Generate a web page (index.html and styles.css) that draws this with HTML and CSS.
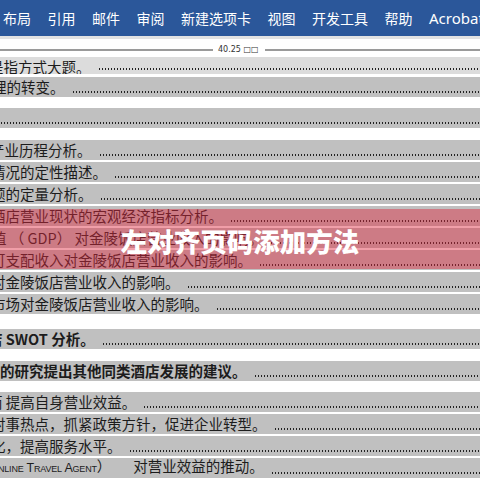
FILE: index.html
```html
<!DOCTYPE html>
<html lang="zh-CN">
<head>
<meta charset="utf-8">
<title>左对齐页码添加方法</title>
<link rel="stylesheet" href="styles.css">
</head>
<body>
<div class="ribbon">
  <span>布局</span><span>引用</span><span>邮件</span><span>审阅</span><span>新建选项卡</span><span>视图</span><span>开发工具</span><span>帮助</span><span class="latin">Acrobat</span>
</div>
<div class="strip"></div>
<div class="ruler">
  <div class="rule-line first"></div>
  <span class="rule-label">40.25 □□</span>
  <div class="rule-line rest"></div>
</div>
<div class="doc">
  <div class="row top"><span class="t cut11">是指方式大题。</span><span class="lead"></span></div>
  <div class="row g3"><span class="t cut8">理的转变。</span><span class="lead"></span></div>
  <div class="row sp11"><span class="lead nolead"></span></div>
  <div class="row sp12"><span class="t cut10">产业历程分析。</span><span class="lead"></span></div>
  <div class="row"><span class="t cut9">情况的定性描述。</span><span class="lead"></span></div>
  <div class="row"><span class="t cut9">题的定量分析。</span><span class="lead"></span></div>
  <div class="row"><span class="t cut9">酒店营业现状的宏观经济指标分析。</span><span class="lead"></span></div>
  <div class="row"><span class="t cut8">值 （ GDP） 对金陵饭店营业收入的影响。</span><span class="lead"></span></div>
  <div class="row"><span class="t cut9">可支配收入对金陵饭店营业收入的影响。</span><span class="lead"></span></div>
  <div class="row"><span class="t cut9">对金陵饭店营业收入的影响。</span><span class="lead"></span></div>
  <div class="row"><span class="t cut9">市场对金陵饭店营业收入的影响。</span><span class="lead"></span></div>
  <div class="row sp15 bold"><span class="t cut12">店 SWOT 分析。</span><span class="lead"></span></div>
  <div class="row sp12 bold"><span class="t">的研究提出其他同类酒店发展的建议。</span><span class="lead"></span></div>
  <div class="row sp11"><span class="t cut12">而 提高自身营业效益。</span><span class="lead"></span></div>
  <div class="row"><span class="t cut9">时事热点，抓紧政策方针，促进企业转型。</span><span class="lead"></span></div>
  <div class="row"><span class="t cut9">化，提高服务水平。</span><span class="lead"></span></div>
  <div class="row"><span class="t cut2"><span class="sc">nline Travel Agent</span><span class="paren">）</span>对营业效益的推动。</span><span class="lead"></span></div>
</div>
<div class="banner"><span class="banner-text">左对齐页码添加方法</span></div>
</body>
</html>
```

FILE: styles.css
```css
html, body {
  margin: 0;
  padding: 0;
}
body {
  width: 480px;
  height: 480px;
  overflow: hidden;
  background: #ffffff;
  position: relative;
  font-family: "Noto Sans CJK SC", "Noto Sans", sans-serif;
}
.ribbon {
  height: 36px;
  background: #2b579a;
  color: #ffffff;
  display: flex;
  align-items: center;
  gap: 16.5px;
  padding-left: 3px;
  font-size: 14px;
  white-space: nowrap;
  overflow: hidden;
}
.ribbon .latin {
  font-family: "Noto Sans", "Open Sans", sans-serif;
  font-size: 15px;
}
.strip {
  height: 3px;
  background: #e2e2e2;
}
.ruler {
  height: 14px;
  padding-top: 4px;
  display: flex;
  align-items: center;
  background: #ffffff;
}
.rule-line {
  height: 2px;
  background: #9a9a9a;
}
.rule-line.first {
  width: 213px;
  flex: none;
}
.rule-line.rest {
  flex: 1;
}
.rule-label {
  font-size: 8px;
  line-height: 10px;
  color: #333333;
  margin: 0 6px 0 5px;
  font-family: "DejaVu Sans", sans-serif;
}
.doc {
  display: flex;
  flex-direction: column;
}
.row {
  height: 20px;
  margin-top: 2px;
  background: #c0c0c0;
  display: flex;
  align-items: flex-end;
  overflow: hidden;
  white-space: nowrap;
  font-size: 14.5px;
  color: #1c1c1c;
}
.row.top {
  margin-top: 0;
  height: 17px;
  background: #dcdcdc;
}
.row.top .t {
  margin-bottom: -3px;
}
.row.g3 { margin-top: 3px; }
.row.sp11 { margin-top: 11px; }
.row.sp12 { margin-top: 12px; }
.row.sp15 { margin-top: 15px; }
.row.bold { font-weight: 700; }
.t {
  flex: none;
  line-height: 20px;
}
.cut2 { margin-left: -2px; }
.cut8 { margin-left: -8px; }
.cut9 { margin-left: -9px; }
.cut10 { margin-left: -10px; }
.cut11 { margin-left: -11px; }
.cut12 { margin-left: -12px; }
.sc {
  font-family: "Liberation Sans", "Noto Sans", sans-serif;
  font-variant: small-caps;
  font-size: 12.5px;
  letter-spacing: -0.2px;
}
.paren {
  margin-right: 22px;
}
.lead {
  flex: 1;
  height: 2px;
  margin: 0 0 4px 7px;
  background-image: radial-gradient(circle at center, #222222 0, #222222 0.6px, transparent 1px);
  background-size: 3px 2px;
  background-repeat: repeat-x;
}
.lead.nolead {
  margin-left: 0;
}
.banner {
  position: absolute;
  left: 0;
  right: 0;
  top: 209px;
  height: 60px;
  background: rgba(222, 40, 62, 0.45);
  display: flex;
  align-items: center;
  justify-content: center;
}
.banner-text {
  color: #ffffff;
  font-size: 26.5px;
  font-weight: 900;
  padding-top: 3px;
}
```
